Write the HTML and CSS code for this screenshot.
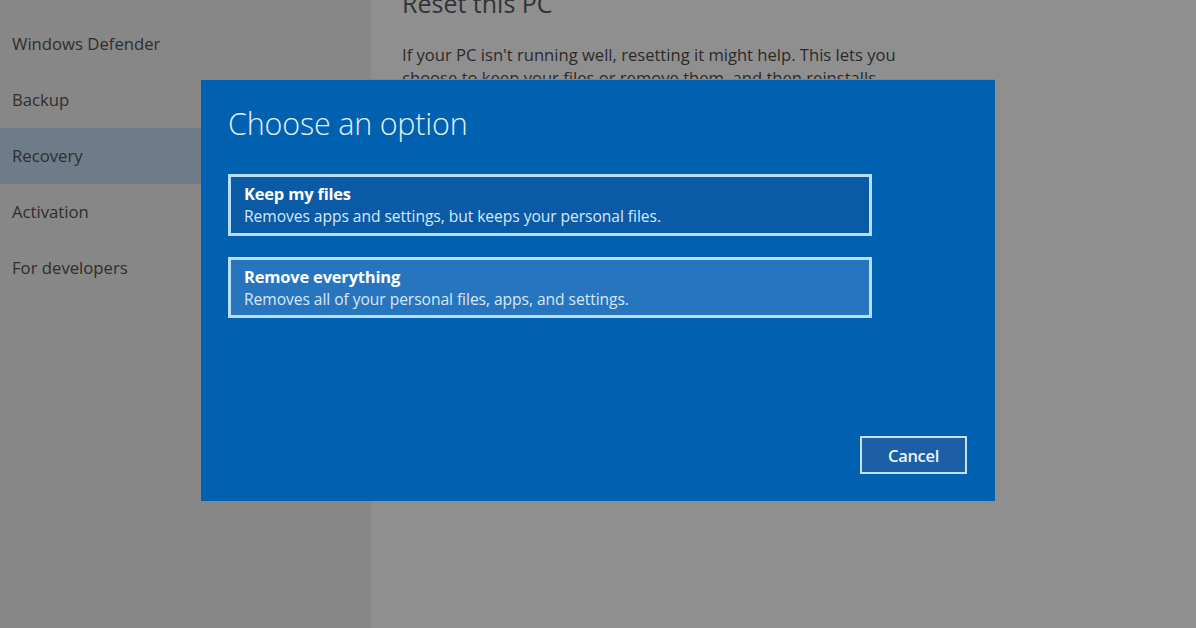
FILE: index.html
```html
<!DOCTYPE html>
<html>
<head>
<meta charset="utf-8">
<link rel="stylesheet" href="styles.css">
</head>
<body>
<div class="screen">
  <aside class="sidebar">
    <ul class="nav">
      <li class="nav-item">Windows Defender</li>
      <li class="nav-item">Backup</li>
      <li class="nav-item selected">Recovery</li>
      <li class="nav-item">Activation</li>
      <li class="nav-item">For developers</li>
    </ul>
  </aside>
  <main class="content">
    <h1 class="heading">Reset this PC</h1>
    <p class="para">If your PC isn't running well, resetting it might help. This lets you choose to keep your files or remove them, and then reinstalls Windows.</p>
  </main>
  <div class="dialog">
    <h2 class="dialog-title">Choose an option</h2>
    <div class="options">
      <div class="option">
        <div class="opt-title">Keep my files</div>
        <div class="opt-desc">Removes apps and settings, but keeps your personal files.</div>
      </div>
      <div class="option hover">
        <div class="opt-title">Remove everything</div>
        <div class="opt-desc">Removes all of your personal files, apps, and settings.</div>
      </div>
    </div>
    <div class="actions">
      <button class="cancel">Cancel</button>
    </div>
  </div>
</div>
</body>
</html>
```
FILE: styles.css
```css
* { box-sizing: border-box; }
html, body { margin: 0; padding: 0; }
body {
  width: 1196px;
  height: 628px;
  overflow: hidden;
  font-family: "Open Sans", "Noto Sans", "Liberation Sans", sans-serif;
  background: #8f8f8f;
}
.screen {
  position: relative;
  display: flex;
  width: 1196px;
  height: 628px;
}
.sidebar {
  width: 372px;
  background: #878787;
  border-right: 1px solid #8c8c8c;
}
.nav {
  list-style: none;
  margin: 0;
  padding: 16px 0 0 0;
  width: 100%;
}
.nav-item {
  height: 56px;
  line-height: 56px;
  padding-left: 12px;
  font-size: 16.7px;
  color: #2e2e2e;
}
.nav-item.selected {
  background: #6e7b88;
}
.content {
  flex: 1;
  padding-left: 30px;
  color: #2e2e2e;
}
.heading {
  margin: -13px 0 0 0;
  font-size: 25px;
  font-weight: 400;
  line-height: 32px;
  color: #333;
}
.para {
  margin: 24px 0 0 0;
  width: 520px;
  font-size: 16.6px;
  line-height: 23px;
  color: #2a2a2a;
}
.dialog {
  position: absolute;
  left: 201px;
  top: 80px;
  width: 794px;
  height: 421px;
  background: #0061b0;
  padding: 22px 27px 0 27px;
  display: flex;
  flex-direction: column;
  box-shadow: 0 -1px 0 #5c8fbd;
}
.dialog-title {
  margin: 0;
  font-size: 30.5px;
  font-weight: 300;
  line-height: 42px;
  color: #e4eef8;
  letter-spacing: -0.2px;
}
.options {
  margin-top: 30px;
  display: flex;
  flex-direction: column;
  gap: 21px;
  width: 644px;
}
.option {
  height: 62px;
  border: 3px solid #b9defa;
  background: #0a5aa6;
  padding: 6px 0 0 13px;
  color: #e6f1fb;
}
.option.hover {
  height: 61px;
  background: #2775bf;
}
.opt-title {
  font-size: 16.5px;
  font-weight: 700;
  line-height: 21px;
  letter-spacing: -0.2px;
  color: #ffffff;
}
.opt-desc {
  font-size: 15.6px;
  line-height: 25px;
  letter-spacing: -0.05px;
  color: #d7e8f7;
}
.actions {
  margin-top: auto;
  margin-bottom: 27px;
  display: flex;
  justify-content: flex-end;
  margin-right: 1px;
}
.cancel {
  width: 107px;
  height: 38px;
  border: 2px solid #c4e2fa;
  background: #1d5fa6;
  color: #eef5fc;
  font-family: inherit;
  font-size: 16.5px;
  font-weight: 600;
  letter-spacing: -0.3px;
  padding: 0;
}
```
